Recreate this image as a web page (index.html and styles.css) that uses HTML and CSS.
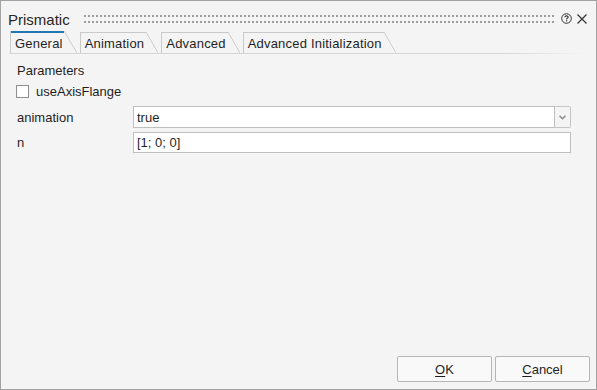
FILE: index.html
```html
<!DOCTYPE html>
<html lang="en">
<head>
    <meta charset="UTF-8">
    <title>Prismatic</title>
    <link rel="stylesheet" href="styles.css">
</head>
<body>

    <div class="dialog">
        <!-- Title bar -->
        <div class="titlebar">
            <span class="title">Prismatic</span>
            <svg class="grip">
                <defs>
                    <pattern id="dots" width="4" height="6" patternUnits="userSpaceOnUse">
                        <rect width="2" height="2" fill="#9d9d9d"/>
                    </pattern>
                </defs>
                <rect width="100%" height="100%" fill="url(#dots)"/>
            </svg>
            <svg class="help" width="11" height="11" viewBox="0 0 11 11">
                <circle cx="5.5" cy="5.5" r="4.8" fill="none" stroke="#333" stroke-width="1"/>
                <path d="M3.9 4.3 C3.9 3.3 4.6 2.9 5.5 2.9 C6.4 2.9 7.1 3.4 7.1 4.2 C7.1 5.1 5.6 5.3 5.6 6.4" fill="none" stroke="#333" stroke-width="1.1"/>
                <rect x="5" y="7.3" width="1.2" height="1.2" fill="#333"/>
            </svg>
            <svg class="close" width="10" height="10" viewBox="0 0 10 10">
                <path d="M0.5 0.5 L9.5 9.5 M9.5 0.5 L0.5 9.5" stroke="#333" stroke-width="1.2"/>
            </svg>
        </div>

        <!-- Tabs -->
        <div class="tabs">
            <div class="tab active"><span class="tab-label">General</span><span class="tab-slant"></span></div>
            <div class="tab"><span class="tab-label">Animation</span><span class="tab-slant"></span></div>
            <div class="tab"><span class="tab-label">Advanced</span><span class="tab-slant"></span></div>
            <div class="tab"><span class="tab-label">Advanced Initialization</span><span class="tab-slant"></span></div>
        </div>

        <!-- Parameters -->
        <div class="content">
            <div class="section">Parameters</div>
            <label class="check"><span class="box"></span>useAxisFlange</label>
            <div class="row">
                <span class="label">animation</span>
                <div class="combo">
                    <span class="combo-value">true</span>
                    <span class="combo-drop">
                        <svg width="7" height="5" viewBox="0 0 7 5"><path d="M0.5 0.8 L3.5 3.8 L6.5 0.8" fill="none" stroke="#8a8a8a" stroke-width="1.5"/></svg>
                    </span>
                </div>
            </div>
            <div class="row">
                <span class="label">n</span>
                <div class="field">[1; 0; 0]</div>
            </div>
        </div>

        <!-- Dialog buttons -->
        <div class="buttons">
            <button class="btn"><u>O</u>K</button>
            <button class="btn"><u>C</u>ancel</button>
        </div>
    </div>

</body>
</html>
```

FILE: styles.css
```css
body {
    margin: 0;
    font-family: "Liberation Sans", Arial, sans-serif;
    font-size: 13px;
    color: #1f1f1f;
}
.dialog {
    width: 597px;
    height: 390px;
    box-sizing: border-box;
    border: 1px solid #a3a3a3;
    background-color: #f4f4f4;
    display: flex;
    flex-direction: column;
}
.titlebar {
    display: flex;
    align-items: flex-start;
    padding: 10px 9px 2px 7px;
}
.title {
    font-size: 15px;
    line-height: 18px;
    color: #2a2520;
}
.grip {
    flex: 1;
    height: 8px;
    margin: 4px 6px 0 14px;
}
.help {
    margin-top: 2px;
}
.close {
    margin: 3px 0 0 5px;
}
.tabs {
    display: flex;
    align-items: flex-end;
    gap: 3px;
    margin: 0 10px 0 8px;
    padding-left: 1px;
    border-bottom: 1px solid;
    border-image: linear-gradient(90deg, #d6d6d6 85%, rgba(214, 214, 214, 0)) 1;
}
.tab {
    display: flex;
    border-left: 1px solid #c9c9c9;
    height: 21px;
    box-sizing: border-box;
}
.tab-label {
    border-top: 1px solid #c9c9c9;
    padding: 3px 2px 0 4px;
    line-height: 15px;
    letter-spacing: 0.2px;
}
.tab-slant {
    width: 12px;
    background: linear-gradient(to top right, transparent calc(50% - 0.8px), #c9c9c9 50%, transparent calc(50% + 0.8px));
}
.tab.active {
    height: 22px;
}
.tab.active .tab-label {
    border-top: 2px solid #1f78b4;
    padding-right: 1px;
}
.tab.active .tab-slant {
    width: 13px;
}
.content {
    flex: 1;
    padding: 9px 25px 0 15px;
}
.section {
    line-height: 15px;
    padding-left: 1px;
}
.check {
    display: flex;
    align-items: center;
    margin-top: 6px;
    line-height: 15px;
}
.box {
    width: 13px;
    height: 13px;
    box-sizing: border-box;
    border: 1px solid #8f8f8f;
    background-color: #fff;
    margin-right: 7px;
}
.row {
    display: flex;
    align-items: center;
}
.row + .row {
    margin-top: 4px;
}
.check + .row {
    margin-top: 7px;
}
.label {
    width: 117px;
    padding-left: 1px;
    box-sizing: border-box;
}
.combo {
    flex: 1;
    display: flex;
    height: 22px;
}
.combo-value {
    flex: 1;
    border: 1px solid #bfbfbf;
    background-color: #fff;
    padding: 3px 3px 0;
}
.combo-drop {
    width: 16px;
    box-sizing: border-box;
    border: 1px solid #c4c4c4;
    border-left: none;
    border-radius: 0 2px 2px 0;
    display: flex;
    align-items: center;
    justify-content: center;
}
.field {
    flex: 1;
    height: 21px;
    box-sizing: border-box;
    border: 1px solid #bfbfbf;
    background-color: #fff;
    padding: 2px 3px 0;
}
.buttons {
    display: flex;
    justify-content: flex-end;
    gap: 3px;
    padding: 0 6px 7px 0;
}
.btn {
    width: 95px;
    height: 26px;
    font-family: "Liberation Sans", Arial, sans-serif;
    font-size: 13px;
    color: #1f1f1f;
    background-color: #f9f9f9;
    border: 1px solid #b5b5b5;
    border-radius: 2px;
}
.btn u {
    text-underline-offset: 2px;
}
```
